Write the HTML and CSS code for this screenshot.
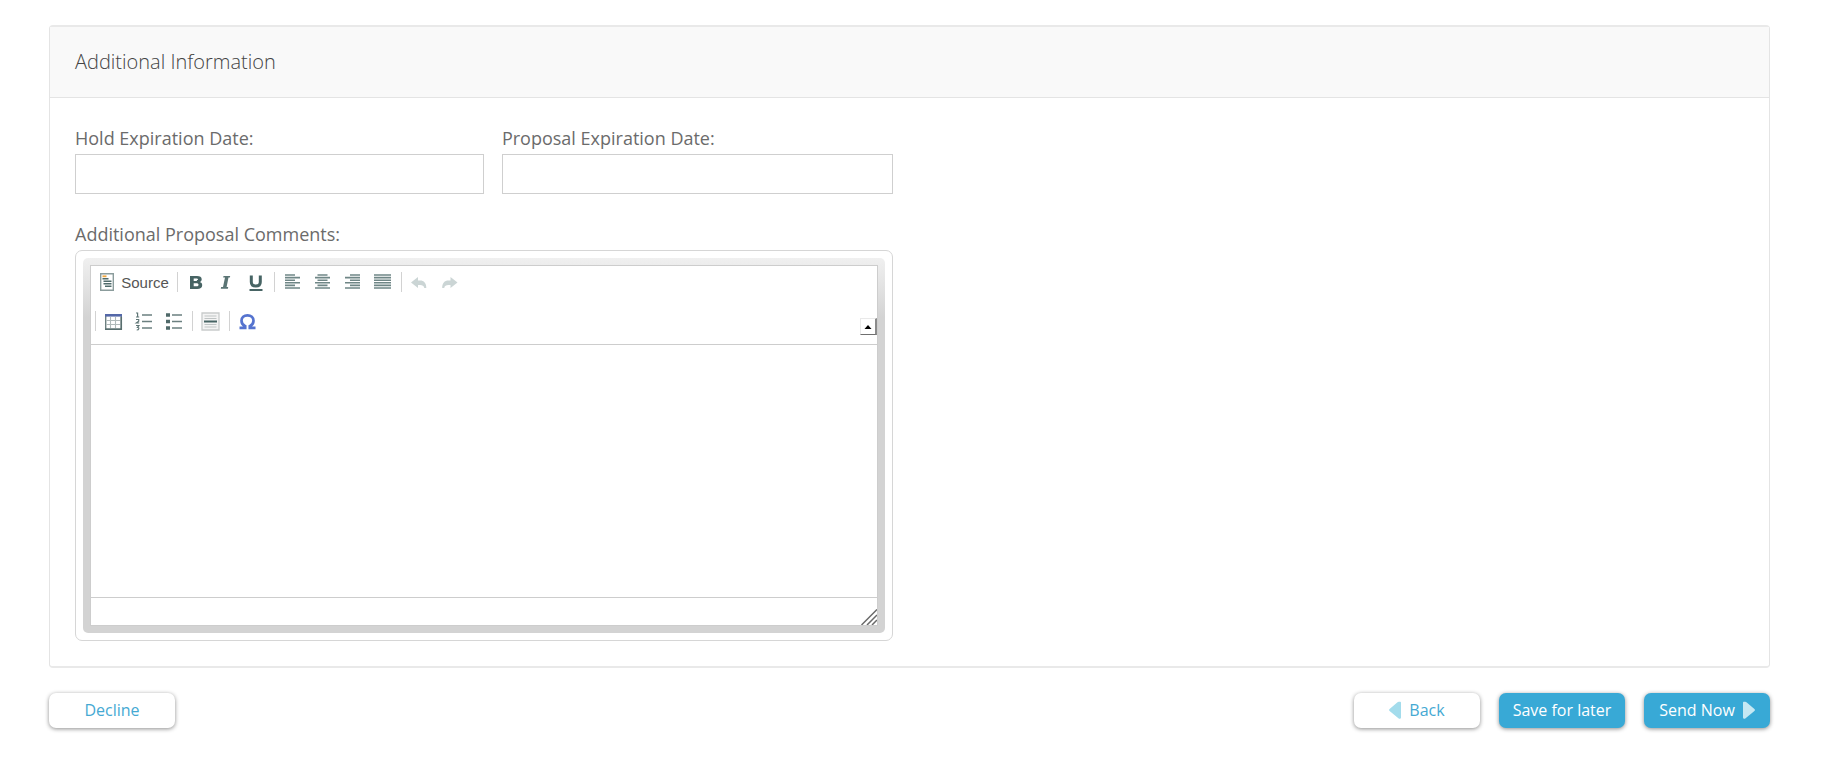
FILE: index.html
```html
<!DOCTYPE html>
<html lang="en">
<head>
<meta charset="utf-8">
<title>Additional Information</title>
<link rel="stylesheet" href="styles.css">
</head>
<body>
<form class="page">
  <section class="panel">
    <h2 class="panel-title">Additional Information</h2>
    <div class="panel-body">
      <div class="fields">
        <div class="field">
          <label for="hold-date">Hold Expiration Date:</label>
          <input id="hold-date" type="text">
        </div>
        <div class="field">
          <label for="proposal-date">Proposal Expiration Date:</label>
          <input id="proposal-date" type="text">
        </div>
        <div class="field field-wide">
          <label for="comments">Additional Proposal Comments:</label>
          <div class="editor">
            <div class="editor-frame">
              <div class="editor-inner">
                <div class="toolbar" role="toolbar">
                  <div class="tool-row">
                    <button type="button" class="tool tool-source">
                      <svg class="icon" viewBox="0 0 20 20"><path d="M3.700 1.700h12.600v16.600H3.700z" fill="#fff" stroke="#8b9c9c" stroke-width="1.400"/><path d="M5.500 4.300h4" stroke="#f0a63c" stroke-width="1.800"/><path d="M5.500 6.800h6M6.500 9.300h8M6.500 11.800h8M8 14.300h6.500" stroke="#4f6b6b" stroke-width="1.500"/></svg>
                      <span>Source</span>
                    </button>
                    <span class="sep"></span>
                    <button type="button" class="tool" aria-label="Bold"><svg class="icon" viewBox="0 0 20 20"><path fill="#476464" fill-rule="evenodd" d="M4 4h7c3 0 4.700 1.100 4.700 3.200 0 1.500-.8 2.500-2 2.900 1.600.4 2.500 1.500 2.500 3.100 0 2.500-1.900 3.800-5 3.800H4zM7.700 6.500v2.400h2.500c1.200 0 1.800-.4 1.800-1.200s-.6-1.200-1.800-1.200zM7.700 11.300v3h2.800c1.300 0 2-.5 2-1.500s-.7-1.500-2-1.500z"/></svg></button>
                    <button type="button" class="tool" aria-label="Italic"><svg class="icon" viewBox="0 0 20 20"><path fill="#5b7575" d="M7.500 4h6.700l-.3 1.500h-1.400L10.600 15h1.600l-.3 1.800H4.800l.3-1.800h1.900l2-9.500H7.200z"/></svg></button>
                    <button type="button" class="tool" aria-label="Underline"><svg class="icon" viewBox="0 0 20 20"><path d="M5.300 3.500v6.500c0 3 1.700 4 4.500 4s4.500-1 4.500-4V3.500" fill="none" stroke="#476464" stroke-width="3"/><path d="M3.500 18h13" stroke="#476464" stroke-width="2"/></svg></button>
                    <span class="sep"></span>
                    <button type="button" class="tool" aria-label="Align left"><svg class="icon" viewBox="0 0 20 20"><path class="lines" d="M2 3h10M2 5.600h15M2 8.200h10M2 10.800h15M2 13.400h10M2 16h15"/></svg></button>
                    <button type="button" class="tool" aria-label="Center"><svg class="icon" viewBox="0 0 20 20"><path class="lines" d="M4.500 3h10M2 5.600h15M4.500 8.200h10M2 10.800h15M4.500 13.400h10M2 16h15"/></svg></button>
                    <button type="button" class="tool" aria-label="Align right"><svg class="icon" viewBox="0 0 20 20"><path class="lines" d="M7 3h10M2 5.600h15M7 8.200h10M2 10.800h15M7 13.400h10M2 16h15"/></svg></button>
                    <button type="button" class="tool" aria-label="Justify"><svg class="icon" viewBox="0 0 20 20"><path class="lines" d="M1 3h17M1 5.600h17M1 8.200h17M1 10.800h17M1 13.400h17M1 16h17"/></svg></button>
                    <span class="sep"></span>
                    <button type="button" class="tool" aria-label="Undo"><svg class="icon" viewBox="0 0 20 20"><path fill="#cbd5d5" d="M1 10.500L8 5v3.500h2c4 0 6.300 2.500 6.300 7.500h-2c-.5-2.300-1.800-3-4.300-3H8V16z"/></svg></button>
                    <button type="button" class="tool" aria-label="Redo"><svg class="icon" viewBox="0 0 20 20"><path fill="#cbd5d5" d="M17.500 10.500L10.500 5v3.500h-2c-4 0-6.300 2.500-6.300 7.500h2c.5-2.300 1.800-3 4.300-3h2V16z"/></svg></button>
                  </div>
                  <div class="tool-row">
                    <span class="sep"></span>
                    <button type="button" class="tool" aria-label="Table"><svg class="icon" viewBox="0 0 20 20"><path d="M1.700 3.700h15.600v14.600H1.700z" fill="#fff" stroke="#6d7f80" stroke-width="1.400"/><path d="M2.400 9.500h14M2.400 13.500h14M6.500 6v12M11.500 6v12" stroke="#b0baba" stroke-width="1.100"/><path d="M1 4.300h17" stroke="#5468a8" stroke-width="2.600"/><path d="M17.300 6v12.300H1" fill="none" stroke="#586e6e" stroke-width="1.500"/></svg></button>
                    <button type="button" class="tool" aria-label="Numbered list"><svg class="icon" viewBox="0 0 20 20"><path d="M8 4h10M8 10.500h10M8 17h10" stroke="#6b8080" stroke-width="1.500"/><path d="M2 2h1.600v4M2 6h3.200M2 8.500h2.700v1.700L2.300 12h2.900M2 14.500h2.900L3.500 16.300c2 0 1.800 2.700-.8 2.700" fill="none" stroke="#5f7676" stroke-width="1.200"/></svg></button>
                    <button type="button" class="tool" aria-label="Bulleted list"><svg class="icon" viewBox="0 0 20 20"><path d="M8 4h10M8 10.500h10M8 17h10" stroke="#6b8080" stroke-width="1.500"/><path fill="#4f6969" d="M2 2.300h4v3.500H2zM2 8.700h4v3.500H2zM2 15.200h4v3.500H2z"/></svg></button>
                    <span class="sep"></span>
                    <button type="button" class="tool" aria-label="Horizontal line"><svg class="icon" viewBox="0 0 20 20"><path d="M1 2h17v17H1z" fill="#f4f4f4" stroke="#c9cccc" stroke-width="1.300"/><path d="M3.500 5h12M3.500 7.500h12M3.500 13.500h12M3.500 16h12" stroke="#bfc4c4"/><path d="M3 10.500h13" stroke="#476464" stroke-width="2"/></svg></button>
                    <span class="sep"></span>
                    <button type="button" class="tool" aria-label="Special character"><svg class="icon" viewBox="0 0 20 20"><path d="M1.500 16.800h5.700v-1.600C4.800 14 3.500 12 3.500 9.700 3.500 6.500 6 4.300 9.500 4.300s6 2.200 6 5.400c0 2.300-1.300 4.300-3.700 5.500v1.600h5.700" fill="none" stroke="#5573cf" stroke-width="2.700"/></svg></button>
                    <button type="button" class="collapse" aria-label="Collapse toolbar"><svg class="collapse-icon" viewBox="0 0 8 8"><path d="M4 2l3.500 4h-7z" fill="#000"/></svg></button>
                  </div>
                </div>
                <textarea id="comments" class="editor-text"></textarea>
                <div class="statusbar">
                  <svg class="grip" viewBox="0 0 16 16"><path d="M.5 16L16 .5M6 16L16 6M11 16l5-5" fill="none" stroke="#6a6a6a" stroke-width="1.500"/></svg>
                </div>
              </div>
            </div>
          </div>
        </div>
      </div>
    </div>
  </section>
  <div class="actions">
    <button type="button" class="btn">Decline</button>
    <div class="actions-right">
      <button type="button" class="btn"><svg class="arrow" viewBox="0 0 12 18"><path d="M11 .8c.6 0 1 .4 1 1v14.600c0 1-1.200 1.900-2.300 1.200L.6 10c-.7-.6-.7-1.400 0-2L8.500 1.300c.7-.5 1.600-.5 2.500-.5z" fill="#a3dcec"/></svg>Back</button>
      <button type="button" class="btn btn-primary">Save for later</button>
      <button type="submit" class="btn btn-primary">Send Now<svg class="arrow" viewBox="0 0 12 18"><path d="M1 .8c-.6 0-1 .4-1 1v14.600c0 1 1.200 1.900 2.300 1.200L11.400 10c.7-.6.7-1.400 0-2L3.500 1.300C2.800.8 1.900.8 1 .8z" fill="#c5e8f3"/></svg></button>
    </div>
  </div>
</form>
</body>
</html>
```
FILE: styles.css
```css
* {
  box-sizing: border-box;
}

body {
  margin: 0;
  background: #fff;
  color: #6b6b6b;
  font-family: "Open Sans", sans-serif;
  font-size: 18px;
}

.page {
  padding: 25px 66px 28px 49px;
}

.panel {
  border: 1px solid #e4e4e4;
  border-top: 2px solid #e9e9e9;
  border-bottom: 2px solid #e9e9e9;
  border-radius: 4px;
}

.panel-title {
  margin: 0;
  padding: 21px 25px;
  border-bottom: 1px solid #e4e4e4;
  background: #f9f9f9;
  color: #444;
  font-size: 20px;
  font-weight: 300;
  line-height: 28px;
}

.panel-body {
  padding: 28px 25px 25px;
}

.fields {
  display: grid;
  grid-template-columns: 409fr 391fr;
  gap: 28px 18px;
  width: 49%;
}

.field {
  display: flex;
  flex-direction: column;
}

.field-wide {
  grid-column: 1 / -1;
}

.field label {
  margin-bottom: 3px;
  line-height: 25px;
}

.field input {
  width: 100%;
  height: 40px;
  padding: 0 10px;
  border: 1px solid #cfcfcf;
  background: #fff;
  font: inherit;
}

.editor {
  padding: 7px;
  border: 1px solid #d6d6d6;
  border-radius: 7px;
}

.editor-frame {
  padding: 7px;
  border-radius: 5px;
  background: linear-gradient(#f0f0f0, #d3d3d3 60px);
}

.editor-inner {
  border: 1px solid #cdcdcd;
  background: #fff;
}

.toolbar {
  display: flex;
  flex-direction: column;
  gap: 7px;
  padding-bottom: 7px;
  border-bottom: 1px solid #cdcdcd;
}

.tool-row {
  display: flex;
  align-items: center;
  height: 32px;
  padding-left: 1px;
}

.tool {
  display: flex;
  align-items: center;
  justify-content: center;
  width: 30px;
  height: 30px;
  padding: 0;
  border: 0;
  background: none;
  color: #555;
}

.tool-source {
  gap: 4px;
  width: 82px;
  font-family: "Liberation Sans", sans-serif;
  font-size: 15px;
}

.icon {
  width: 20px;
  height: 20px;
}

.lines {
  fill: none;
  stroke: #6f8686;
  stroke-width: 1.6;
}

.sep {
  width: 1px;
  height: 20px;
  margin: 0 3px;
  background: #d2d2d2;
}

.collapse {
  display: flex;
  align-items: center;
  justify-content: center;
  align-self: flex-end;
  width: 17px;
  height: 17px;
  margin: 0 0 2px auto;
  padding: 0;
  border: 1px solid #e9e9e9;
  border-right: 2px solid #8b8b8b;
  border-bottom-color: #6f6f6f;
  background: #fff;
}

.collapse-icon {
  width: 8px;
  height: 8px;
}

.editor-text {
  display: block;
  width: 100%;
  height: 252px;
  padding: 10px;
  border: 0;
  outline: 0;
  resize: none;
  font: inherit;
}

.statusbar {
  display: flex;
  align-items: flex-end;
  justify-content: flex-end;
  height: 28px;
  border-top: 1px solid #cdcdcd;
}

.grip {
  width: 16px;
  height: 16px;
}

.actions {
  display: flex;
  justify-content: space-between;
  margin-top: 25px;
}

.actions-right {
  display: flex;
  gap: 19px;
}

.btn {
  display: flex;
  align-items: center;
  justify-content: center;
  gap: 8px;
  min-width: 126px;
  height: 35px;
  padding: 0 12px 1px;
  border: 0;
  border-radius: 7px;
  background: #fff;
  box-shadow: 0 1px 4px rgba(0, 0, 0, 0.45);
  color: #45a9d3;
  font-family: inherit;
  font-size: 16px;
  font-weight: 500;
}

.btn-primary {
  background: #38a9d6;
  color: #fff;
}

.arrow {
  width: 12px;
  height: 18px;
}
```
